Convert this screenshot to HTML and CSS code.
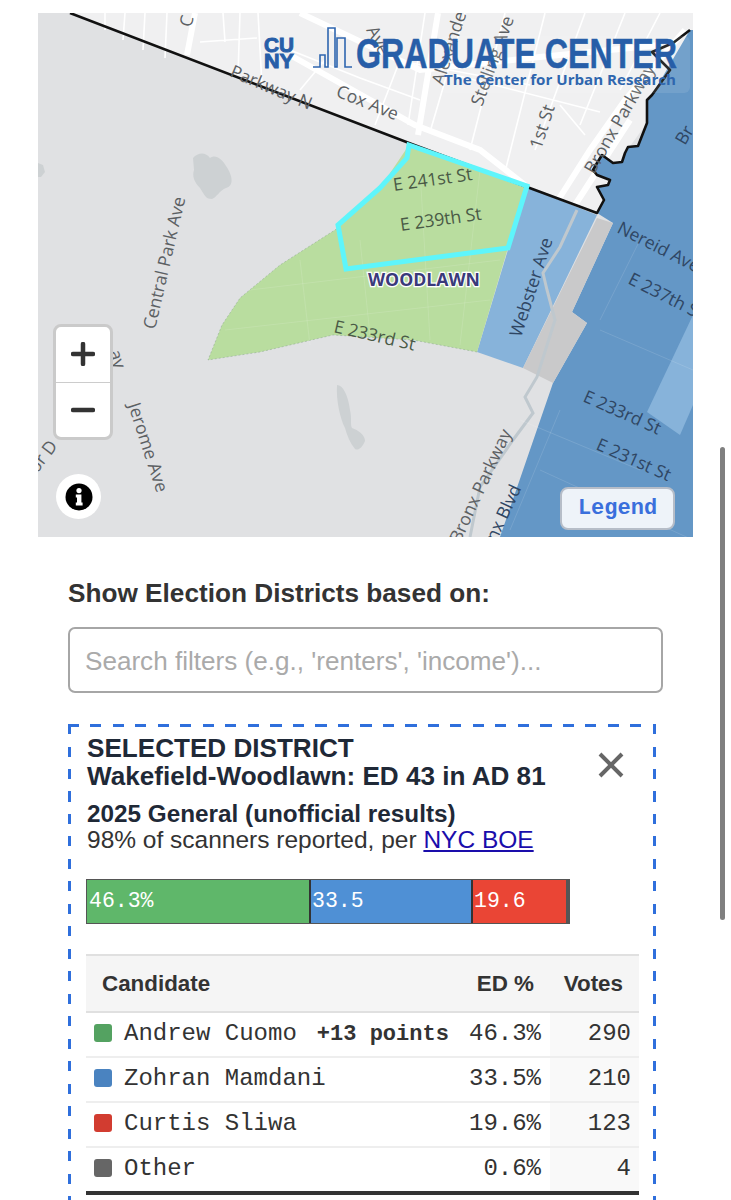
FILE: index.html
```html
<!DOCTYPE html>
<html lang="en">
<head>
<meta charset="utf-8">
<title>Election Districts</title>
<link rel="stylesheet" href="styles.css">
</head>
<body>
<div class="scrollbar"></div>
<main class="page">
  <section class="map">
    <svg class="map-svg" viewBox="38 13 655 524" width="655" height="524" xmlns="http://www.w3.org/2000/svg">
      <rect class="park" x="38" y="13" width="655" height="524"/>
      <polygon class="land" points="70,13 693,13 693,30 670,70 647,100 647,123 625,153 597,213 527,187 409,143"/>
      <g class="road-thin">
        <path d="M105,13 V30 M125,13 L123,40 M145,13 L143,50 M167,13 L165,58 M200,42 L257,38 M223,13 L225,42 M240,13 L238,75 M258,13 L262,85 M290,50 L360,78 L420,100 M300,90 L325,60 M400,60 L375,125 M425,13 L408,125 M465,13 L430,132 M505,13 L470,150 M545,13 L505,172 M585,13 L535,150 M625,13 L580,125 M660,13 L620,90 M455,75 L600,112 M560,105 L585,135 M395,60 L530,85"/>
      </g>
      <g class="road-wide">
        <path d="M195,13 L187,55 M300,13 L420,70 L530,58 L660,45 M290,55 L415,125 L480,150 L525,185 M438,13 L418,135 M685,30 L625,100 L590,150 L555,205 M575,205 L630,120"/>
      </g>
      <path class="blob" d="M38,163 L43,165 L45,172 L41,177 L38,177 Z"/>
      <path class="blob" d="M193,158 C198,152 206,152 210,158 C214,155 220,156 226,166 C233,176 234,186 226,188 C220,190 216,198 212,199 C206,199 205,196 200,188 C194,182 192,176 194,170 Z"/>
      <path class="blob" d="M337,385 C343,385 348,395 350,410 C352,418 350,425 352,428 C358,430 365,435 365,441 C362,448 358,451 355,449 C350,443 347,435 345,428 C340,418 336,400 337,385 Z"/>

      <polygon class="deep" points="690,30 652,95 647,100 647,123 638,146 628,147 622,162 613,163 602,155 597,163 593,170 597,175 610,180 608,185 597,187 604,200 597,213 613,223 572,312 587,323 553,383 500,537 693,537 693,30"/>
      <polygon class="pale" points="693,315 647,412 680,435 693,405"/>
      <polygon class="pale" points="527,187 597,215 523,368 477,352"/>
      <polygon class="concrete" points="597,218 613,223 572,312 587,323 553,383 523,368"/>
      <path class="trail" d="M577,210 L560,247 L543,273 L547,290 L555,320 L537,377 L525,397 L533,413 L513,440 L480,487 L470,537"/>
      <polygon class="green" points="409,145 527,186 508,248 477,352 413,340 333,335 260,352 208,360 222,325 240,298 280,265 338,228 380,188"/>
      <polyline class="green-edge" points="477,352 413,340 333,335 260,352 208,360 222,325 240,298 280,265 338,228"/>
      <path class="block-lines" d="M250,290 L500,260 M225,330 L490,300 M300,260 L310,345 M360,240 L370,335 M420,170 L430,340 M480,170 L460,345 M520,420 L640,470 M540,470 L693,540 M600,330 L693,370 M640,240 L600,320 M560,410 L510,530"/>
      <text class="street street-dark" transform="translate(394,191) rotate(-8)">E 241st St</text>
      <polyline class="boundary" points="70,13 409,143 527,187 597,213 604,200 597,187 608,185 610,180 597,175 593,170 597,163 602,155 613,163 622,162 625,153 628,147 638,146 647,123 647,100 652,95 670,70 667,67 652,52 673,43 690,30"/>
      <polygon class="selected" points="409,145 527,186 508,248 346,269 338,225 380,188 407,158"/>

      <text class="street" transform="translate(229,76) rotate(23)">Parkway N</text>
      <text class="street" transform="translate(335,96) rotate(22)">Cox Ave</text>
      <text class="street" transform="translate(155,330) rotate(-77)">Central Park Ave</text>
      <text class="street" transform="translate(191,28) rotate(-75)">C</text>
      <text class="street" transform="translate(366,30) rotate(62)">Ave</text>
      <text class="street" transform="translate(443,86) rotate(-72)">Alexander</text>
      <text class="street" transform="translate(482,107) rotate(-70)">Stelling Ave</text>
      <text class="street" transform="translate(541,150) rotate(-72)">1st St</text>
      <text class="street" transform="translate(594,175) rotate(-60)">Bronx Parkway</text>
      <text class="street street-blue" transform="translate(685,146) rotate(-60)">Br</text>
      <text class="street street-dark" transform="translate(401,231) rotate(-8)">E 239th St</text>
      <text class="street street-dark" transform="translate(333,332) rotate(13)">E 233rd St</text>
      <text class="street street-blue" transform="translate(521,338) rotate(-72)">Webster Ave</text>
      <text class="street street-blue" transform="translate(616,232) rotate(27)">Nereid Ave</text>
      <text class="street street-blue" transform="translate(627,283) rotate(27)">E 237th St</text>
      <text class="street street-blue" transform="translate(582,401) rotate(24)">E 233rd St</text>
      <text class="street street-blue" transform="translate(595,449) rotate(24)">E 231st St</text>
      <text class="street" transform="translate(460,544) rotate(-65)">Bronx Parkway</text>
      <text class="street street-blue" transform="translate(484,569) rotate(-65)">Bronx Blvd</text>
      <text class="street" transform="translate(128,405) rotate(72)">Jerome Ave</text>
      <text class="street" transform="translate(37,474) rotate(-53)">or D</text>
      <text class="street" transform="translate(109,352) rotate(72)">ay</text>
      <text class="place" x="424" y="286" textLength="112" text-anchor="middle" lengthAdjust="spacingAndGlyphs">WOODLAWN</text>

      <rect class="logo-veil" x="440" y="36" width="250" height="57" rx="6"/>
      <text class="logo-cuny" x="264" y="52" textLength="30" lengthAdjust="spacingAndGlyphs">CU</text>
      <text class="logo-cuny" x="264" y="68" textLength="30" lengthAdjust="spacingAndGlyphs">NY</text>
      <path class="logo-icon" d="M313,67 H320 V55 H325 V67 H328 V28 H335 V67 H337 V38 H345 V67 H352"/>
      <text class="logo-main" x="356" y="68" textLength="321" lengthAdjust="spacingAndGlyphs">GRADUATE CENTER</text>
      <text class="logo-sub" x="444" y="85" textLength="232" lengthAdjust="spacingAndGlyphs">The Center for Urban Research</text>
    </svg>
    <div class="zoom-ctl">
      <button class="zoom-btn" type="button" aria-label="Zoom in">
        <svg width="24" height="24" viewBox="0 0 24 24"><path class="zoom-glyph" d="M12,2 V22 M2,12 H22"/></svg>
      </button>
      <button class="zoom-btn" type="button" aria-label="Zoom out">
        <svg width="24" height="24" viewBox="0 0 24 24"><path class="zoom-glyph" d="M2,12 H22"/></svg>
      </button>
    </div>
    <div class="info-btn">
      <svg width="28" height="28" viewBox="0 0 28 28"><circle cx="14" cy="14" r="13.5" fill="#000"/><circle cx="14" cy="7.6" r="2.6" fill="#fff"/><path d="M10.8,11.6 H16.4 V19.4 H17.6 V22.4 H10.8 V19.4 H12 V14.4 H10.8 Z" fill="#fff"/></svg>
    </div>
    <button class="legend-btn" type="button">Legend</button>
  </section>

  <section class="filters">
    <h2 class="filters-title">Show Election Districts based on:</h2>
    <div class="search">Search filters (e.g., 'renters', 'income')...</div>
  </section>

  <section class="panel">
    <div class="panel-head">
      <h3 class="panel-title">SELECTED DISTRICT<br>Wakefield-Woodlawn: ED 43 in AD 81</h3>
      <svg class="close" width="26" height="26" viewBox="0 0 26 26"><path d="M2,2 L24,24 M24,2 L2,24"/></svg>
    </div>
    <p class="race">2025 General (unofficial results)</p>
    <p class="reported">98% of scanners reported, per <a href="#">NYC BOE</a></p>
    <div class="bar">
      <div class="seg seg-green">46.3%</div>
      <div class="seg seg-blue">33.5</div>
      <div class="seg seg-red">19.6</div>
      <div class="seg seg-other"></div>
    </div>
    <table class="results">
      <thead>
        <tr><th class="col-name">Candidate</th><th class="col-pct">ED %</th><th class="col-votes">Votes</th></tr>
      </thead>
      <tbody>
        <tr><td class="name"><span class="swatch sw-green"></span>Andrew Cuomo<b class="margin">+13 points</b></td><td class="pct">46.3%</td><td class="votes">290</td></tr>
        <tr><td class="name"><span class="swatch sw-blue"></span>Zohran Mamdani</td><td class="pct">33.5%</td><td class="votes">210</td></tr>
        <tr><td class="name"><span class="swatch sw-red"></span>Curtis Sliwa</td><td class="pct">19.6%</td><td class="votes">123</td></tr>
        <tr><td class="name"><span class="swatch sw-gray"></span>Other</td><td class="pct">0.6%</td><td class="votes">4</td></tr>
      </tbody>
    </table>
  </section>
</main>
</body>
</html>
```
FILE: styles.css
```css
html, body { margin: 0; padding: 0; height: 1200px; overflow: hidden; background: #fff; }
body { font-family: "Liberation Sans", Arial, sans-serif; color: #1f2937; }
.page { padding: 13px 0 0 38px; }
.scrollbar { position: fixed; left: 720px; top: 447px; width: 5px; height: 473px; border-radius: 3px; background: #808080; }

.map { position: relative; width: 655px; height: 524px; overflow: hidden; }
.map-svg { display: block; }
.park { fill: #e0e1e3; }
.land { fill: #f0f0f1; }
.road-thin path { fill: none; stroke: #fff; stroke-width: 1.6; }
.road-wide path { fill: none; stroke: #fff; stroke-width: 6; }
.blob { fill: #cdd1d3; }
.deep { fill: #6497c6; }
.pale { fill: #87b3da; }
.concrete { fill: #c9c9ca; }
.trail { fill: none; stroke: #bfc8ce; stroke-width: 3; }
.green { fill: #b9dd9f; }
.green-edge { fill: none; stroke: #6f8f7a; stroke-width: .6; stroke-dasharray: 2 2; opacity: .6; }
.block-lines { fill: none; stroke: rgba(255,255,255,.12); stroke-width: 1; }
.boundary { fill: none; stroke: #111; stroke-width: 2.6; stroke-linejoin: round; }
.selected { fill: none; stroke: #5ef5fb; stroke-width: 5; stroke-linejoin: miter; }
.logo-veil { fill: rgba(255,255,255,.1); }
.logo-cuny { font-family: "Liberation Sans", sans-serif; font-weight: 700; font-size: 19.5px; fill: #275ea8; stroke: #275ea8; stroke-width: .9px; }
.logo-icon { fill: none; stroke: #2f66b0; stroke-width: 1.6; }
.logo-main { font-family: "Liberation Sans Narrow", "Liberation Sans", sans-serif; font-weight: 700; font-size: 43px; fill: #275ea8; stroke: #275ea8; stroke-width: .5px; }
.logo-sub { font-family: "Open Sans", sans-serif; font-weight: 700; font-size: 15px; fill: #2f66ae; }
.street { font-family: "Open Sans", sans-serif; font-size: 17.6px; fill: #5c6063; }
.street-dark { fill: #4a5a46; }
.street-blue { fill: #2f4663; }
.place { font-family: "Open Sans", sans-serif; font-weight: 700; font-size: 18px; fill: #3a3a7a; stroke: #fff; stroke-width: 2.5px; paint-order: stroke; }

.zoom-ctl { position: absolute; left: 15px; top: 311px; width: 60px; height: 116px; box-sizing: border-box; border: 3px solid #cacaca; border-radius: 8px; background: #fff; display: flex; flex-direction: column; }
.zoom-btn { flex: 1; border: 0; padding: 0; background: transparent; display: flex; align-items: center; justify-content: center; }
.zoom-btn + .zoom-btn { border-top: 1px solid #ccc; }
.zoom-glyph { fill: none; stroke: #333; stroke-width: 4.5; stroke-linecap: round; }
.info-btn { position: absolute; left: 18px; top: 461px; width: 45px; height: 45px; border-radius: 50%; background: #fff; display: flex; align-items: center; justify-content: center; }
.legend-btn { position: absolute; left: 522px; top: 474px; width: 115px; height: 43px; box-sizing: border-box; border: 2px solid #b6bdc8; border-radius: 8px; background: #eef3f9; color: #3a6fdc; font-family: "Liberation Mono", monospace; font-weight: 700; font-size: 22px; padding: 0; }

.filters { padding-left: 30px; width: 595px; }
.filters-title { margin: 41px 0 0; font-size: 26.2px; line-height: 30px; font-weight: 700; color: #333; }
.search { margin-top: 19px; height: 66px; box-sizing: border-box; border: 2px solid #a6a6a6; border-radius: 7px; padding: 2px 15px 0; display: flex; align-items: center; font-size: 26.1px; color: #aaa; }

.panel {
  margin: 31px 0 0 30px; width: 588px; height: 600px; box-sizing: border-box; padding: 10px 17px 0 18px;
  background-image:
    repeating-linear-gradient(90deg, #2f6fdc 0 11px, transparent 11px 22.5px),
    repeating-linear-gradient(180deg, #2f6fdc 0 10px, transparent 10px 22.5px),
    repeating-linear-gradient(180deg, #2f6fdc 0 10px, transparent 10px 22.5px);
  background-size: 100% 3px, 3px 100%, 3px 100%;
  background-position: 0 0, 0 0, 100% 0;
  background-repeat: no-repeat;
}
.panel-head { display: flex; justify-content: space-between; align-items: center; padding: 0 15px 0 1px; }
.panel-title { margin: 0; font-size: 26.1px; line-height: 28px; font-weight: 700; color: #1f2937; white-space: nowrap; }
.close { flex: none; margin-top: 6px; }
.close path { fill: none; stroke: #666; stroke-width: 4; }
.race { margin: 10px 0 0 1px; font-size: 24.3px; line-height: 27px; font-weight: 700; color: #1f2937; }
.reported { margin: 0 0 0 1px; font-size: 24.5px; line-height: 26px; color: #333; }
.reported a { color: #1a0dab; }
.bar { margin-top: 26px; width: 484px; height: 45px; box-sizing: border-box; border: 1px solid #555; display: flex; }
.seg { box-sizing: border-box; color: #fff; font-family: "Liberation Mono", monospace; font-size: 21.5px; line-height: 43px; padding-left: 1px; white-space: nowrap; }
.seg-green { width: 222px; background: #5fb76a; padding-left: 2px; }
.seg-blue { width: 162px; background: #4f90d5; border-left: 2px solid #333; }
.seg-red { width: 95px; background: #ea4535; border-left: 2px solid #333; }
.seg-other { flex: 1; background: #555; padding: 0; }

.results { margin-top: 30px; width: 553px; border-collapse: collapse; table-layout: fixed; }
.results th { box-sizing: border-box; height: 57px; padding: 0; background: #f5f5f5; border-top: 2px solid #e0e0e0; border-bottom: 2px solid #e0e0e0; font-size: 22.4px; font-weight: 700; color: #333; }
.col-name { width: 369px; text-align: left; padding-left: 16px !important; }
.col-pct { width: 95px; text-align: right; padding-right: 16px !important; }
.col-votes { width: 89px; text-align: right; padding-right: 16px !important; }
.results td { height: 41px; padding: 0 0 2px; border-bottom: 2px solid #eee; font-family: "Liberation Mono", monospace; font-size: 24px; color: #333; white-space: nowrap; }
.results tbody tr:last-child td { border-bottom: 4px solid #333; }
.name { padding-left: 8px !important; }
.swatch { display: inline-block; width: 18px; height: 18px; border-radius: 3px; margin-right: 12px; vertical-align: -2px; }
.sw-green { background: #54a261; }
.sw-blue { background: #4a83c0; }
.sw-red { background: #d23c30; }
.sw-gray { background: #666; }
.margin { margin-left: 20px; font-size: 22px; }
.pct { text-align: right; padding-right: 9px !important; }
.votes { text-align: right; padding-right: 8px !important; background: #f9f9f9; }
```
